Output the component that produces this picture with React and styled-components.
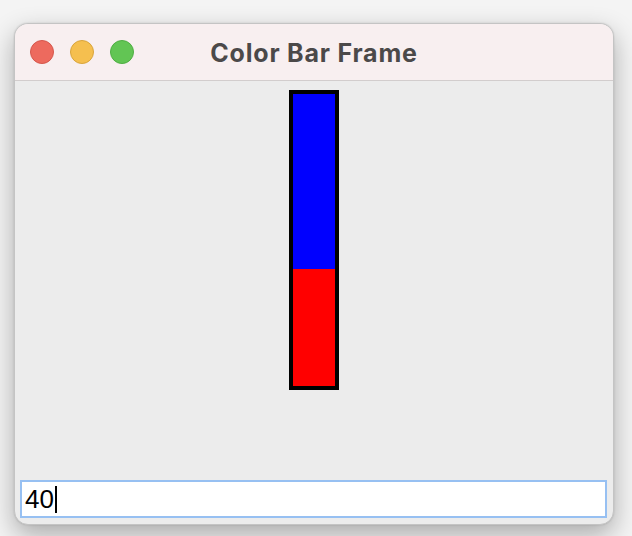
import React from 'react';
import styled, { createGlobalStyle } from 'styled-components';

const GlobalStyle = createGlobalStyle`
  html, body {
    margin: 0;
    padding: 0;
    background: #f4f4f4;
  }
  body {
    width: 632px;
    height: 536px;
    overflow: hidden;
  }
`;

const Desktop = styled.div`
  width: 632px;
  height: 536px;
  padding: 23px 0 0 14px;
  box-sizing: border-box;
`;

const Frame = styled.div`
  width: 600px;
  height: 502px;
  box-sizing: border-box;
  border: 1px solid #c4c4c4;
  border-radius: 14px;
  overflow: hidden;
  background: #ececec;
  box-shadow: 0 10px 26px rgba(0, 0, 0, 0.3), 0 0 2px rgba(0, 0, 0, 0.15);
  display: flex;
  flex-direction: column;
`;

const TitleBar = styled.div`
  position: relative;
  height: 56px;
  flex: none;
  background: #f8eff0;
  border-bottom: 1px solid #d2cdcd;
  display: flex;
  align-items: center;
  justify-content: center;
`;

const Lights = styled.div`
  position: absolute;
  left: 15px;
  top: 16px;
  display: flex;
  gap: 16px;
`;

const Light = styled.span`
  width: 24px;
  height: 24px;
  box-sizing: border-box;
  border-radius: 50%;
  background: ${p => p.fill};
  border: 1px solid ${p => p.edge};
`;

const Title = styled.div`
  font-family: Inter, "Liberation Sans", sans-serif;
  font-weight: 700;
  font-size: 25px;
  letter-spacing: 0.8px;
  color: #4b4949;
  margin-top: 1px;
`;

const Content = styled.div`
  flex: 1;
  display: flex;
  flex-direction: column;
  align-items: center;
  padding: 9px 6px 6px 5px;
`;

const Bar = styled.div`
  width: 50px;
  height: 300px;
  box-sizing: border-box;
  border: 4px solid #000;
  display: flex;
  flex-direction: column;
`;

const Segment = styled.div`
  background: ${p => p.color};
  flex: ${p => p.share};
`;

const Spacer = styled.div`
  flex: 1;
`;

const Field = styled.div`
  align-self: stretch;
  height: 38px;
  box-sizing: border-box;
  background: #fff;
  border: 2px solid #97c0f2;
  display: flex;
  align-items: center;
  padding-left: 3px;
  font-family: "Liberation Sans", Arial, sans-serif;
  font-size: 26px;
  color: #000;
`;

const Caret = styled.span`
  width: 2px;
  height: 27px;
  background: #000;
  margin-left: 1px;
`;

export default function App() {
  const value = 40;
  return (
    <>
      <GlobalStyle />
      <Desktop>
        <Frame>
          <TitleBar>
            <Lights>
              <Light fill="#ed6a5e" edge="#d5574c" />
              <Light fill="#f5bf4f" edge="#d9a53c" />
              <Light fill="#62c554" edge="#4fae43" />
            </Lights>
            <Title>Color Bar Frame</Title>
          </TitleBar>
          <Content>
            <Bar>
              <Segment color="#0000ff" share={100 - value} />
              <Segment color="#ff0000" share={value} />
            </Bar>
            <Spacer />
            <Field>
              {value}
              <Caret />
            </Field>
          </Content>
        </Frame>
      </Desktop>
    </>
  );
}
